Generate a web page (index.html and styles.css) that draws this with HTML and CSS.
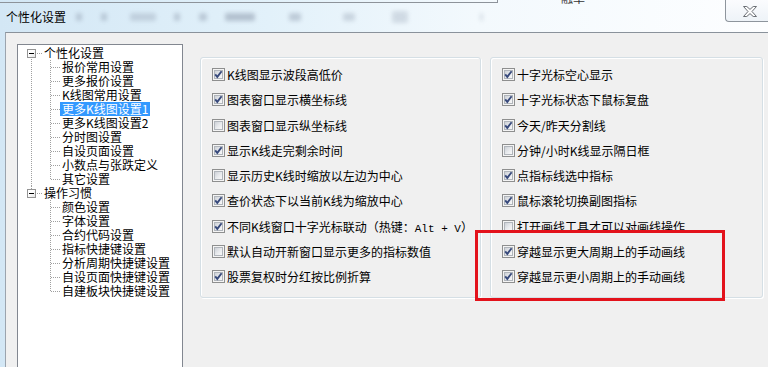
FILE: index.html
```html
<!DOCTYPE html>
<html lang="zh-CN">
<head>
<meta charset="utf-8">
<title>个性化设置</title>
<link rel="stylesheet" href="styles.css">
</head>
<body>
<div class="window">
  <div class="titlebar">
    <span class="title">个性化设置</span>
    <div class="blurs">
      <i class="blob b1"></i><i class="blob b2"></i><i class="blob b3"></i><i class="blob b4"></i><i class="blob b5"></i>
      <i class="blob b6"></i><i class="blob b7"></i><i class="blob b8"></i><i class="blob b9"></i><i class="blob b10"></i>
    </div>
    <div class="peek"><span>融单</span></div>
    <div class="close">
      <svg width="14" height="11" viewBox="0 0 14 11"><polygon points="0.5,0.5 3.8,0.5 7,3.4 10.2,0.5 13.5,0.5 9,5.5 13.5,10.5 10.2,10.5 7,7.6 3.8,10.5 0.5,10.5 5,5.5" fill="#fdfdfd" stroke="#6b6f75" stroke-width="1"/></svg>
    </div>
  </div>
  <div class="client">
    <div class="tree">
      <div class="node first">
        <div class="root-row"><span class="expander"></span><span class="hline"></span><span class="label">个性化设置</span></div>
        <div class="children">
          <div class="child"><span class="label">报价常用设置</span></div>
          <div class="child"><span class="label">更多报价设置</span></div>
          <div class="child"><span class="label">K线图常用设置</span></div>
          <div class="child"><span class="label selected">更多K线图设置1</span></div>
          <div class="child"><span class="label">更多K线图设置2</span></div>
          <div class="child"><span class="label">分时图设置</span></div>
          <div class="child"><span class="label">自设页面设置</span></div>
          <div class="child"><span class="label">小数点与张跌定义</span></div>
          <div class="child"><span class="label">其它设置</span></div>
        </div>
      </div>
      <div class="node">
        <div class="root-row last"><span class="expander"></span><span class="hline"></span><span class="label">操作习惯</span></div>
        <div class="children">
          <div class="child"><span class="label">颜色设置</span></div>
          <div class="child"><span class="label">字体设置</span></div>
          <div class="child"><span class="label">合约代码设置</span></div>
          <div class="child"><span class="label">指标快捷键设置</span></div>
          <div class="child"><span class="label">分析周期快捷键设置</span></div>
          <div class="child"><span class="label">自设页面快捷键设置</span></div>
          <div class="child"><span class="label">自建板块快捷键设置</span></div>
        </div>
      </div>
    </div>

    <div class="groups">
      <div class="group left">
        <div class="opt"><span class="cb on"></span><span>K线图显示波段高低价</span></div>
        <div class="opt"><span class="cb on"></span><span>图表窗口显示横坐标线</span></div>
        <div class="opt"><span class="cb"></span><span>图表窗口显示纵坐标线</span></div>
        <div class="opt"><span class="cb on"></span><span>显示K线走完剩余时间</span></div>
        <div class="opt"><span class="cb"></span><span>显示历史K线时缩放以左边为中心</span></div>
        <div class="opt"><span class="cb on"></span><span>查价状态下以当前K线为缩放中心</span></div>
        <div class="opt"><span class="cb on"></span><span>不同K线窗口十字光标联动（热键：<span class="mono">Alt + V</span>）</span></div>
        <div class="opt"><span class="cb"></span><span>默认自动开新窗口显示更多的指标数值</span></div>
        <div class="opt"><span class="cb on"></span><span>股票复权时分红按比例折算</span></div>
      </div>
      <div class="group right">
        <div class="opt"><span class="cb on"></span><span>十字光标空心显示</span></div>
        <div class="opt"><span class="cb on"></span><span>十字光标状态下鼠标复盘</span></div>
        <div class="opt"><span class="cb on"></span><span>今天/昨天分割线</span></div>
        <div class="opt"><span class="cb"></span><span>分钟/小时K线显示隔日框</span></div>
        <div class="opt"><span class="cb on"></span><span>点指标线选中指标</span></div>
        <div class="opt"><span class="cb on"></span><span>鼠标滚轮切换副图指标</span></div>
        <div class="opt"><span class="cb"></span><span>打开画线工具才可以对画线操作</span></div>
        <div class="opt"><span class="cb on"></span><span>穿越显示更大周期上的手动画线</span></div>
        <div class="opt"><span class="cb on"></span><span>穿越显示更小周期上的手动画线</span></div>
        <div class="redmark"></div>
      </div>
    </div>
  </div>
</div>
</body>
</html>
```

FILE: styles.css
```css
* { box-sizing: border-box; }
html, body { margin: 0; padding: 0; }
body {
  width: 768px;
  height: 367px;
  overflow: hidden;
  font-family: "Noto Sans CJK SC", "Noto Sans", sans-serif;
  font-size: 12px;
  color: #000;
  background: #f0f0f0;
}
.window {
  width: 768px;
  height: 367px;
  display: flex;
  flex-direction: column;
  background: linear-gradient(to right, #d3e7f5 0%, #e2f1fa 35%, #f3f9fd 62%, #fdfeff 100%);
}
.titlebar {
  height: 32px;
  flex: none;
  display: flex;
  align-items: flex-start;
  padding-left: 6px;
  background:
    linear-gradient(#8d939a, #8d939a) 0 2px / 497px 1px no-repeat,
    linear-gradient(#8d939a, #8d939a) 497px 0 / 1px 3px no-repeat;
}
.title {
  line-height: 32px;
  padding-top: 1px;
  color: #000;
  white-space: nowrap;
}
.blurs {
  display: flex;
  align-items: center;
  height: 32px;
  padding-top: 2px;
}
.blob {
  display: block;
  height: 8px;
  background: #8f9cae;
  opacity: .45;
  filter: blur(2px);
  border-radius: 2px;
}
.b1 { margin-left: 10px; width: 6px; }
.b2 { margin-left: 19px; width: 6px; }
.b3 { margin-left: 23px; width: 26px; opacity: .35; }
.b4 { margin-left: 18px; width: 6px; }
.b5 { margin-left: 19px; width: 8px; }
.b6 { margin-left: 18px; width: 30px; opacity: .55; }
.b7 { margin-left: 34px; width: 12px; }
.b8 { margin-left: 42px; width: 12px; opacity: .35; }
.b9 { margin-left: 37px; width: 16px; height: 12px; opacity: .3; }
.b10 { margin-left: 72px; width: 3px; opacity: .3; }
.peek {
  margin-left: 78px;
  height: 5px;
  overflow: hidden;
  color: #333;
  line-height: 12px;
}
.peek span { display: block; margin-top: -8px; }
.close {
  margin-left: auto;
  width: 43px;
  height: 22px;
  border-left: 1px solid #8e959d;
  border-bottom: 1px solid #8e959d;
  border-bottom-left-radius: 4px;
  background: linear-gradient(#fbfcfe, #eef3f8);
  display: flex;
  align-items: center;
  justify-content: center;
  padding-left: 5px;
  padding-top: 1px;
}
.close svg { display: block; }

.client {
  flex: 1;
  min-height: 0;
  overflow: hidden;
  display: flex;
  align-items: flex-start;
  margin-left: 5px;
  border-left: 1px solid #9ba4ae;
  border-top: 1px solid #8a929b;
  background: #f0f0f0;
  padding: 11px 0 0 11px;
}

/* tree */
.tree {
  flex: none;
  width: 166px;
  height: 340px;
  border: 1px solid #828790;
  background: #fff;
  padding-top: 1px;
}
.node.first {
  background: repeating-linear-gradient(to bottom, #a0a0a0 0 1px, transparent 1px 2px) 13px 11px / 1px calc(100% - 11px) no-repeat;
}
.root-row {
  display: flex;
  align-items: center;
  height: 14px;
  padding-left: 9px;
}
.root-row.last {
  background: repeating-linear-gradient(to bottom, #a0a0a0 0 1px, transparent 1px 2px) 13px 0 / 1px 3px no-repeat;
}
.expander {
  width: 9px;
  height: 9px;
  border: 1px solid #949494;
  background: linear-gradient(135deg, #fff 40%, #e4e4e4);
  display: flex;
  align-items: center;
  justify-content: center;
  flex: none;
}
.expander::before {
  content: "";
  width: 5px;
  height: 1px;
  background: #000;
}
.hline {
  width: 5px;
  height: 1px;
  margin-left: 1px;
  background: repeating-linear-gradient(to right, #a0a0a0 0 1px, transparent 1px 2px);
  flex: none;
}
.label {
  padding: 0 2px;
  line-height: 14px;
  height: 14px;
  white-space: nowrap;
}
.label.selected {
  background: #3399ff;
  color: #fff;
}
.children {
  margin-left: 32px;
  background: repeating-linear-gradient(to bottom, #a0a0a0 0 1px, transparent 1px 2px) 0 0 / 1px calc(100% - 7px) no-repeat;
}
.child {
  display: flex;
  align-items: center;
  height: 14px;
}
.child::before {
  content: "";
  flex: none;
  width: 9px;
  height: 1px;
  margin-left: 1px;
  background: repeating-linear-gradient(to right, #a0a0a0 0 1px, transparent 1px 2px);
}

/* group boxes */
.groups {
  display: flex;
  align-items: flex-start;
  gap: 9px;
  margin-left: 17px;
  margin-top: 13px;
}
.group {
  border: 1px solid #d5dfe5;
  border-radius: 3px;
  box-shadow: inset 1px 1px 0 #fff, 1px 1px 0 #fff;
  padding: 4px 0 8px 11px;
}
.group.left { width: 281px; }
.group.right { width: 273px; position: relative; }
.opt {
  display: flex;
  align-items: center;
  gap: 2px;
  height: 25.25px;
  white-space: nowrap;
}
.mono {
  font-family: "Liberation Mono", "DejaVu Sans Mono", monospace;
  font-size: 11px;
}
.cb {
  flex: none;
  width: 13px;
  height: 13px;
  border: 1px solid #8e8f8f;
  background: #f4f4f4;
  padding: 1px;
  display: grid;
}
.cb::before {
  content: "";
  grid-area: 1 / 1;
  border: 1px solid #b0b5bb;
  background: linear-gradient(135deg, #cdd1d7 0%, #e9ebee 55%, #f8f8f8 100%);
}
.cb.on::after {
  content: "";
  grid-area: 1 / 1;
  margin: -1px;
  background: url("data:image/svg+xml;utf8,<svg xmlns='http://www.w3.org/2000/svg' width='11' height='11' viewBox='0 0 11 11'><path d='M2.2 5.4 L4.3 7.9 L8.6 2.2' fill='none' stroke='%23384a7c' stroke-width='1.9'/></svg>") center / 11px 11px no-repeat;
}
.redmark {
  position: absolute;
  left: -16px;
  top: 172px;
  width: 250px;
  height: 71px;
  border: 3px solid #e3121b;
}
```
